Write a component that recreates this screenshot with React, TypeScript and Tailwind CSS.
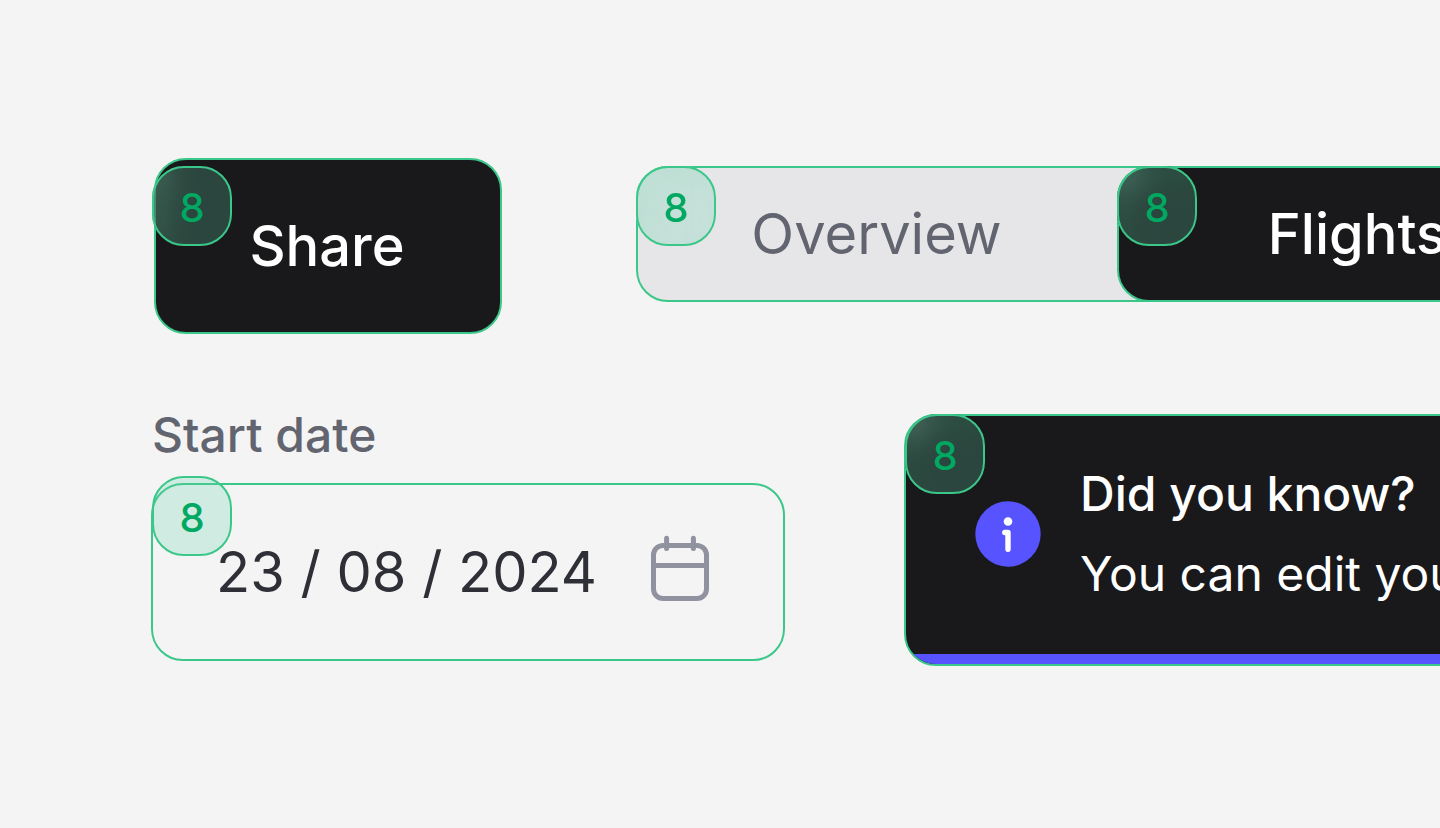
type BadgeProps = { frosted?: boolean; className?: string };

function RadiusBadge({ frosted = false, className = "" }: BadgeProps) {
  return (
    <span
      className={`pointer-events-none absolute flex size-20 items-center justify-center rounded-[32px] border-2 border-[#3cc78a] bg-[#64d0a6]/25 pt-1 text-[40px] leading-none font-medium text-[#00a862] ${
        frosted ? "backdrop-blur-lg" : ""
      } ${className}`}
    >
      8
    </span>
  );
}

function CalendarIcon() {
  return (
    <svg
      viewBox="0 0 64 80"
      className="h-20 w-16 shrink-0"
      fill="none"
      stroke="#9092a0"
      strokeWidth="5"
      strokeLinecap="round"
      aria-hidden="true"
    >
      <rect x="5.5" y="13.5" width="53" height="53" rx="9.5" />
      <path d="M18.6 6.3v10.2M45.4 6.3v10.2" />
      <path d="M5.5 33.4h53" strokeLinecap="butt" />
    </svg>
  );
}

function InfoIcon() {
  return (
    <svg viewBox="0 0 66 66" className="size-[66px] shrink-0" fill="none" aria-hidden="true">
      <circle cx="33" cy="33" r="32.7" fill="#5753ff" />
      <circle cx="33" cy="20.5" r="4.3" fill="#fff" />
      <path
        d="M29.8 31.5H33V48.2"
        stroke="#fff"
        strokeWidth="5.4"
        strokeLinecap="round"
        strokeLinejoin="round"
      />
    </svg>
  );
}

export default function App() {
  return (
    <main className="flex min-h-screen flex-col gap-20 overflow-hidden bg-[#f4f4f4] pt-[158px] pb-40 font-['Inter',sans-serif]">
      <section className="flex items-start pl-[154px]">
        <button
          type="button"
          className="relative h-44 w-[348px] shrink-0 rounded-[32px] border-2 border-[#3cc78a] bg-[#19191b] pr-0.5 text-[56px] font-medium text-white"
        >
          Share
          <RadiusBadge frosted className="top-1.5 -left-1" />
        </button>

        <div
          role="tablist"
          className="mt-2 ml-[134px] flex h-34 shrink-0 rounded-[32px] border-2 border-[#3cc78a] bg-[#e6e6e9] text-[56px]"
        >
          <button
            type="button"
            role="tab"
            aria-selected="false"
            className="relative w-[479px] shrink-0 pr-0.5 text-[#62646f]"
          >
            Overview
            <RadiusBadge frosted className="-top-0.5 -left-0.5" />
          </button>
          <button
            type="button"
            role="tab"
            aria-selected="true"
            className="relative -my-0.5 w-120 shrink-0 rounded-[32px] border-2 border-[#3cc78a] bg-[#19191b] font-medium text-white"
          >
            Flights
            <RadiusBadge frosted className="-top-0.5 -left-0.5" />
          </button>
        </div>
      </section>

      <section className="flex items-start pl-[151px]">
        <div className="flex w-[634px] shrink-0 flex-col gap-7">
          <label
            htmlFor="start-date"
            className="pt-px pl-px text-5xl leading-10 font-medium text-[#62646f]"
          >
            Start date
          </label>
          <div className="relative flex h-[178px] items-center gap-10 rounded-[32px] border-2 border-[#3cc78a] pr-[71px] pl-[63px]">
            <input
              id="start-date"
              type="text"
              defaultValue="23 / 08 / 2024"
              className="min-w-0 flex-1 bg-transparent text-[56px] text-[#2f3037] outline-none"
            />
            <CalendarIcon />
            <RadiusBadge className="-top-[9px] -left-px" />
          </div>
        </div>

        <div
          role="status"
          className="relative ml-[119px] shrink-0 rounded-[32px] border-2 border-[#3cc78a] bg-[#19191b] text-5xl text-white"
        >
          <div className="overflow-hidden rounded-[30px]">
            <div className="flex h-[238px] items-center gap-[39px] pr-24 pb-[3px] pl-[69px]">
              <InfoIcon />
              <div className="leading-20 whitespace-nowrap">
                <p className="font-medium">Did you know?</p>
                <p>You can edit your</p>
              </div>
            </div>
            <div className="h-2.5 bg-[#5753ff]" />
          </div>
          <RadiusBadge frosted className="-top-0.5 -left-px" />
        </div>
      </section>
    </main>
  );
}
